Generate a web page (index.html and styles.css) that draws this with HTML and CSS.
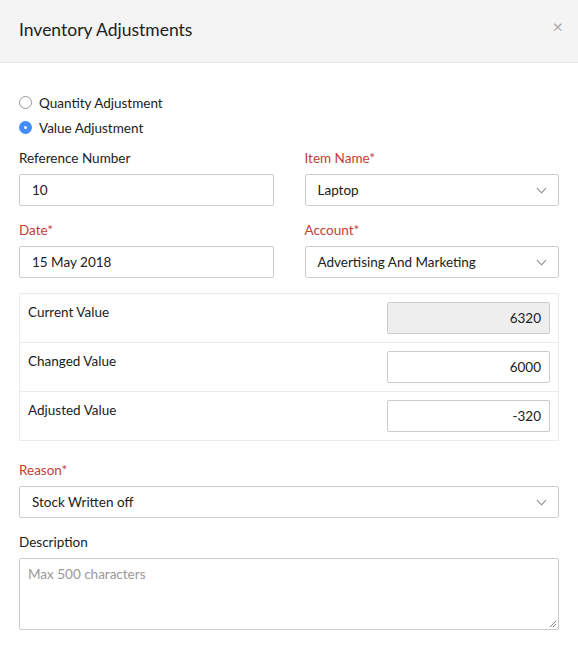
FILE: index.html
```html
<!DOCTYPE html>
<html lang="en">
<head>
    <meta charset="UTF-8">
    <meta name="viewport" content="width=device-width, initial-scale=1.0">
    <title>Inventory Adjustments</title>
    <link rel="stylesheet" href="styles.css">
</head>
<body>
    <div class="modal">
        <div class="modal-header">
            <h3>Inventory Adjustments</h3>
            <span class="close">&times;</span>
        </div>
        <div class="modal-body">
            <div class="radios">
                <label class="radio"><span class="dot"></span>Quantity Adjustment</label>
                <label class="radio"><span class="dot checked"></span>Value Adjustment</label>
            </div>

            <div class="row">
                <div class="field">
                    <div class="label">Reference Number</div>
                    <div class="input">10</div>
                </div>
                <div class="field">
                    <div class="label required">Item Name*</div>
                    <div class="input select">Laptop<span class="caret"></span></div>
                </div>
            </div>

            <div class="row last">
                <div class="field">
                    <div class="label required">Date*</div>
                    <div class="input">15 May 2018</div>
                </div>
                <div class="field">
                    <div class="label required">Account*</div>
                    <div class="input select">Advertising And Marketing<span class="caret"></span></div>
                </div>
            </div>

            <div class="values">
                <div class="value-row">
                    <span>Current Value</span>
                    <div class="input num disabled">6320</div>
                </div>
                <div class="value-row">
                    <span>Changed Value</span>
                    <div class="input num">6000</div>
                </div>
                <div class="value-row">
                    <span>Adjusted Value</span>
                    <div class="input num">-320</div>
                </div>
            </div>

            <div class="field wide">
                <div class="label required">Reason*</div>
                <div class="input select">Stock Written off<span class="caret"></span></div>
            </div>

            <div class="field wide">
                <div class="label">Description</div>
                <div class="input textarea"><span class="placeholder">Max 500 characters</span><span class="grip"></span></div>
            </div>
        </div>
    </div>
</body>
</html>
```

FILE: styles.css
```css
body {
    margin: 0;
    font-family: Lato, "Open Sans", sans-serif;
    font-size: 13.5px;
    color: #212121;
    background: #fff;
}
.modal {
    width: 578px;
}
.modal-header {
    height: 63px;
    background: #f4f4f4;
    border-bottom: 1px solid #e4e4e4;
    display: flex;
    align-items: center;
    justify-content: space-between;
    padding: 0 19px;
    box-sizing: border-box;
}
.modal-header h3 {
    margin: 0;
    font-size: 17.5px;
    font-weight: normal;
    color: #222;
    margin-top: -4px;
}
.close {
    font-size: 18px;
    color: #aaa;
    margin-top: -10px;
    margin-right: -4px;
}
.modal-body {
    padding: 31px 19px 0;
}
.radios {
    display: flex;
    flex-direction: column;
    gap: 8px;
    margin-bottom: 14px;
}
.radio {
    display: flex;
    align-items: center;
    gap: 7px;
    height: 17px;
}
.dot {
    width: 11px;
    height: 11px;
    border: 1px solid #999;
    border-radius: 50%;
    box-sizing: content-box;
}
.dot.checked {
    width: 13px;
    height: 13px;
    border: none;
    background: #408dfb;
    position: relative;
}
.dot.checked::after {
    content: "";
    position: absolute;
    left: 5px;
    top: 5px;
    width: 3px;
    height: 3px;
    background: #fff;
    border-radius: 50%;
}
.row {
    display: flex;
    gap: 31px;
    margin-bottom: 16px;
}
.row.last {
    margin-bottom: 15px;
}
.row .field {
    flex: 1;
}
.label {
    height: 16px;
    margin-bottom: 8px;
}
.required {
    color: #c1403a;
}
.input {
    height: 32px;
    border: 1px solid #ccc;
    border-radius: 2px;
    box-sizing: border-box;
    padding: 0 12px;
    display: flex;
    align-items: center;
    background: #fff;
}
.select {
    justify-content: space-between;
}
.caret {
    width: 6px;
    height: 6px;
    border-right: 1.3px solid #888;
    border-bottom: 1.3px solid #888;
    transform: rotate(45deg);
    margin-top: -4px;
    margin-right: 1px;
}
.values {
    border: 1px solid #ebebeb;
    margin: 0 0 21px;
}
.value-row {
    height: 49px;
    display: flex;
    justify-content: space-between;
    padding: 8px 8px 0 8px;
    box-sizing: border-box;
    border-top: 1px solid #ebebeb;
}
.value-row:first-child {
    border-top: none;
    height: 48px;
}
.value-row span {
    padding-top: 2px;
}
.num {
    width: 163px;
    justify-content: flex-end;
    padding: 0 8px;
}
.disabled {
    background: #eee;
}
.wide {
    margin-bottom: 16px;
}
.textarea {
    height: 72px;
    align-items: flex-start;
    padding: 7px 8px;
    position: relative;
}
.placeholder {
    color: #999;
}
.grip {
    position: absolute;
    right: 2px;
    bottom: 2px;
    width: 6px;
    height: 6px;
    background: linear-gradient(135deg, transparent 45%, #888 45%, #888 55%, transparent 55%, transparent 70%, #888 70%, #888 80%, transparent 80%);
}
```
